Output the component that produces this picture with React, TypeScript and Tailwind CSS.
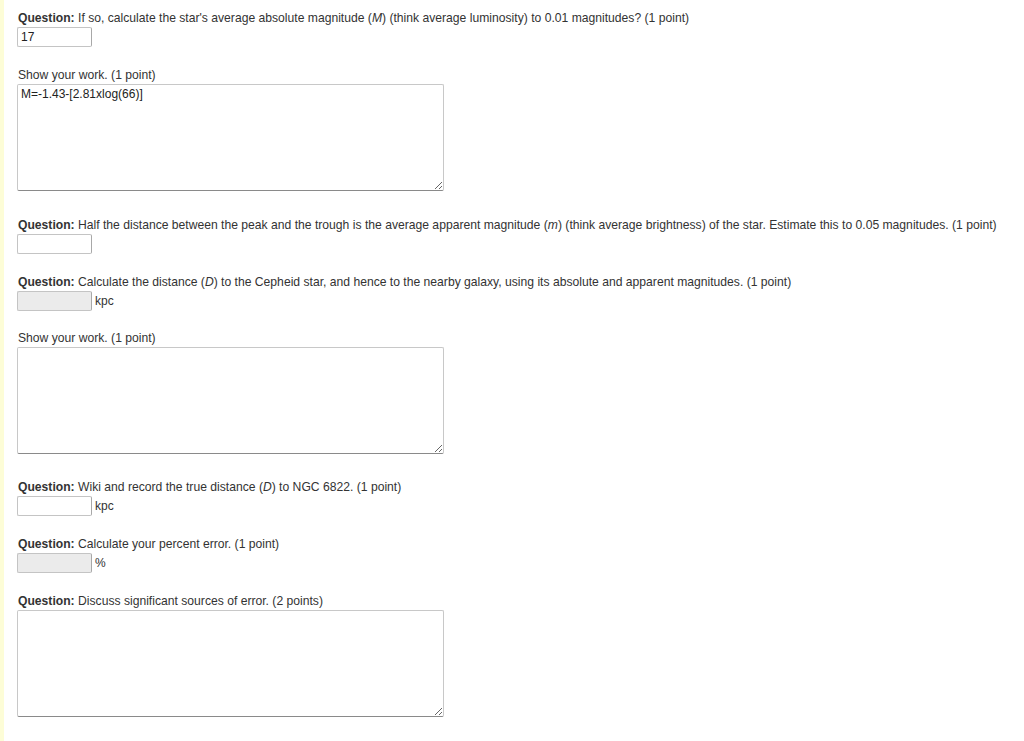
import React from 'react';

const font = { fontFamily: '"Liberation Sans", Arial, sans-serif' };

function Label({ children }: { children: React.ReactNode }) {
  return <div className="ml-[1px] h-[16px] text-[12.15px] leading-[16px] text-[#333]">{children}</div>;
}

function Q({ children }: { children: React.ReactNode }) {
  return (
    <Label>
      <b>Question:</b> {children}
    </Label>
  );
}

function Box({ value, disabled, unit }: { value?: string; disabled?: boolean; unit?: string }) {
  return (
    <div className="mt-[1px] flex h-[20px] items-center">
      <input
        readOnly
        value={value ?? ''}
        className={
          'h-[20px] w-[75px] rounded-[2px] border border-[#c4c4c4] border-r-[#a8a8a8] px-[3px] text-[12px] text-[#222] outline-none ' +
          (disabled ? 'bg-[#ebebeb]' : 'bg-white')
        }
        style={font}
      />
      {unit && <span className="ml-[3px] text-[12px] leading-[16px] text-[#333]">{unit}</span>}
    </div>
  );
}

function Area({ value }: { value?: string }) {
  return (
    <textarea
      readOnly
      value={value ?? ''}
      className="mt-[1px] block h-[107px] w-[427px] rounded-[2px] border border-[#c8c8c8] border-b-[#8a8a8a] bg-white px-[3px] py-[2px] text-[12px] leading-[14px] text-[#222] outline-none"
      style={font}
    />
  );
}

export default function App() {
  return (
    <div className="flex min-h-[741px] bg-white" style={font}>
      <div className="w-[4px] shrink-0 bg-[#fdfdd7]" />
      <div className="pl-[13px] pt-[10px]">
        <Q>
          If so, calculate the star's average absolute magnitude (<i>M</i>) (think average luminosity) to
          0.01 magnitudes? (1 point)
        </Q>
        <Box value="17" />

        <div className="mt-[20px]">
          <Label>Show your work. (1 point)</Label>
          <Area value="M=-1.43-[2.81xlog(66)]" />
        </div>

        <div className="mt-[26px]">
          <Q>
            Half the distance between the peak and the trough is the average apparent magnitude (<i>m</i>)
            (think average brightness) of the star. Estimate this to 0.05 magnitudes. (1 point)
          </Q>
          <Box />
        </div>

        <div className="mt-[20px]">
          <Q>
            Calculate the distance (<i>D</i>) to the Cepheid star, and hence to the nearby galaxy, using its
            absolute and apparent magnitudes. (1 point)
          </Q>
          <Box disabled unit="kpc" />
        </div>

        <div className="mt-[19px]">
          <Label>Show your work. (1 point)</Label>
          <Area />
        </div>

        <div className="mt-[25px]">
          <Q>
            Wiki and record the true distance (<i>D</i>) to NGC 6822. (1 point)
          </Q>
          <Box unit="kpc" />
        </div>

        <div className="mt-[20px]">
          <Q>Calculate your percent error. (1 point)</Q>
          <Box disabled unit="%" />
        </div>

        <div className="mt-[20px]">
          <Q>Discuss significant sources of error. (2 points)</Q>
          <Area />
        </div>
      </div>
    </div>
  );
}
